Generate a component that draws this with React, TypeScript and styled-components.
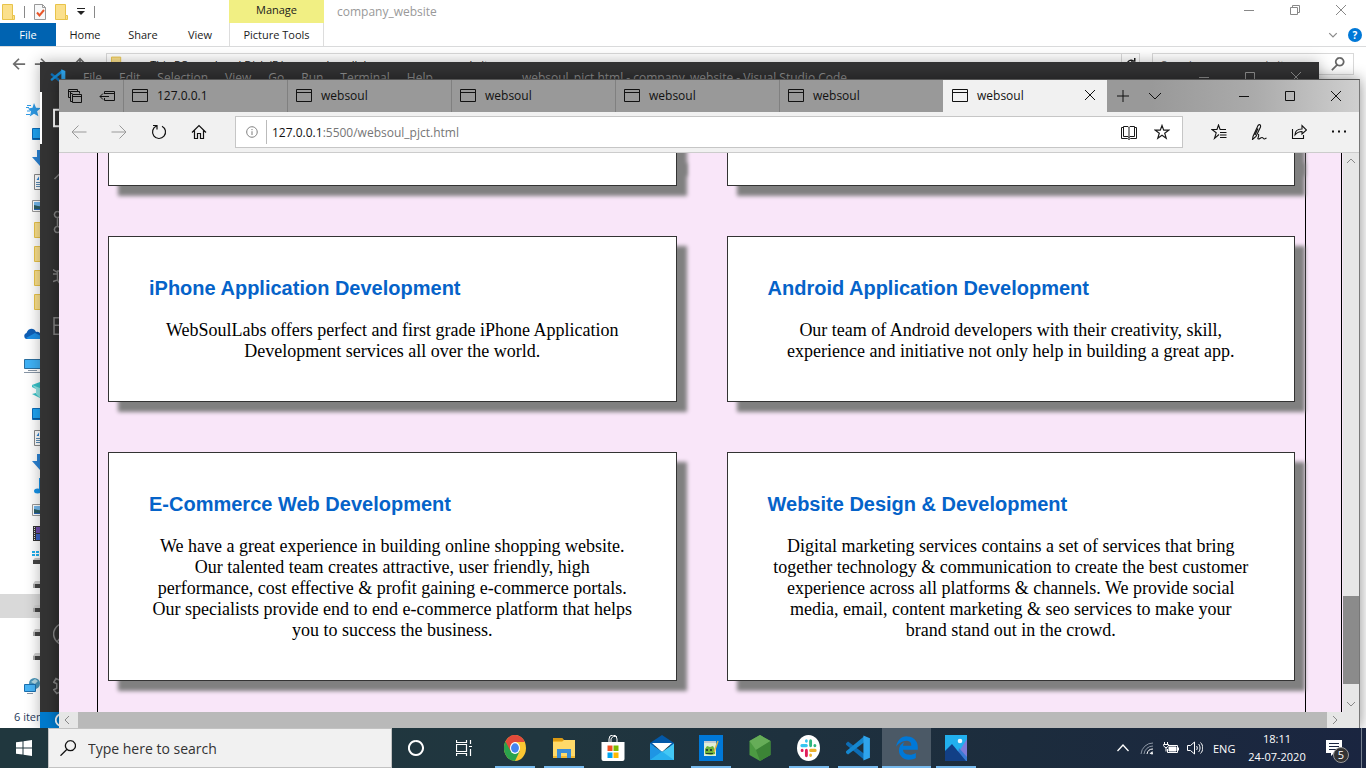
import React from "react";
import styled, { createGlobalStyle, css } from "styled-components";
import { FaEdgeLegacy } from "react-icons/fa";

const GlobalStyle = createGlobalStyle`
  *, *::before, *::after { box-sizing: border-box; }
  html, body { margin: 0; height: 100%; overflow: hidden; }
  #root { height: 100%; }
  body { font-family: "Open Sans", "Noto Sans", sans-serif; font-size: 11px; color: #1b1b1b; }
  button, input { font: inherit; color: inherit; margin: 0; padding: 0; border: 0; background: none; outline: none; }
  button { cursor: pointer; }
  svg { display: block; flex: none; }
  ul, ol { list-style: none; margin: 0; padding: 0; }
`;

/* ---------- desktop ---------- */

const Screen = styled.div`
  display: flex;
  flex-direction: column;
  height: 100vh;
  overflow: hidden;
`;

const Desktop = styled.div`
  position: relative;
  flex: 1;
  min-height: 0;
  overflow: hidden;
`;

/* ---------- file explorer ---------- */

const Explorer = styled.section`
  display: flex;
  flex-direction: column;
  height: 100%;
  background: #fff;
`;

const ExplorerTitle = styled.header`
  display: flex;
  height: 23px;
`;

const QuickAccess = styled.div`
  display: flex;
  align-items: center;
  gap: 9px;
  width: 229px;
  padding-left: 2px;
`;

const QuickLine = styled.span`
  width: 1px;
  height: 12px;
  background: #888;
`;

const ContextTab = styled.div`
  width: 95px;
  height: 23px;
  background: #f1ef83;
  text-align: center;
  line-height: 20px;
`;

const ExplorerName = styled.h1`
  margin: 0;
  padding-left: 13px;
  font-size: 12px;
  font-weight: 400;
  line-height: 24px;
  color: #999;
`;

const CaptionButtons = styled.div`
  display: flex;
  margin-left: auto;
`;

const ExplorerCaption = styled(CaptionButtons)`
  height: 20px;
  padding-right: 2px;
`;

const CaptionButton = styled.button<{ $tone: string }>`
  display: flex;
  align-items: center;
  justify-content: center;
  width: 46px;
  color: ${(p) => p.$tone};
`;

const Ribbon = styled.nav`
  display: flex;
  height: 24px;
  border-bottom: 1px solid #dadbdc;
`;

const RibbonTab = styled.button<{ $width: number; $kind?: "file" | "tool" }>`
  width: ${(p) => p.$width}px;
  height: 23px;
  ${(p) =>
    p.$kind === "file" &&
    css`
      background: #0063b1;
      color: #fff;
    `}
  ${(p) =>
    p.$kind === "tool" &&
    css`
      margin-left: 1px;
      border-left: 1px solid #ddd;
      border-right: 1px solid #ddd;
    `}
`;

const RibbonEnd = styled.div`
  display: flex;
  align-items: center;
  gap: 10px;
  margin-left: auto;
  padding-right: 4px;
  color: #8a8a8a;
`;

const HelpButton = styled.button`
  width: 14px;
  height: 14px;
  border-radius: 7px;
  background: #0078d7;
  color: #fff;
  font-size: 10px;
  font-weight: 700;
  line-height: 14px;
`;

const AddressRow = styled.div`
  display: flex;
  gap: 12px;
  height: 51px;
  padding: 6px 12px 0 0;
`;

const AddressArrows = styled.div`
  display: flex;
  align-items: center;
  justify-content: space-between;
  width: 94px;
  height: 22px;
  padding: 0 7px 0 12px;
  color: #6d6d6d;
`;

const Breadcrumb = styled.ol`
  display: flex;
  flex: 1;
  align-items: center;
  gap: 12px;
  height: 22px;
  padding-left: 4px;
  border: 1px solid #d9d9d9;
`;

const RefreshCell = styled.li`
  display: flex;
  align-items: center;
  justify-content: center;
  width: 18px;
  height: 20px;
  margin-left: auto;
  border-left: 1px solid #d9d9d9;
`;

const ExplorerSearch = styled.label`
  display: flex;
  align-items: center;
  width: 202px;
  height: 22px;
  padding: 0 8px;
  border: 1px solid #d9d9d9;
  color: #666;

  input { flex: 1; min-width: 0; }
  input::placeholder { color: #666; opacity: 1; }
`;

const NavTree = styled.ul`
  flex: 1;
  width: 200px;
  min-height: 0;
  overflow: hidden;
`;

const NavRow = styled.li<{ $level: number; $first?: boolean; $selected?: boolean }>`
  display: flex;
  align-items: center;
  height: 24px;
  margin-top: ${(p) => (p.$first ? 8 : 0)}px;
  padding-left: ${(p) => (p.$level ? 32 : 24)}px;
  background: ${(p) => (p.$selected ? "#d9d9d9" : "transparent")};
`;

const ExplorerStatus = styled.footer`
  height: 22px;
  padding-left: 14px;
  color: #1e395b;
  line-height: 22px;
`;

/* ---------- code editor ---------- */

const EditorWindow = styled.section`
  position: absolute;
  inset: 62px 47px 0 40px;
  display: flex;
  flex-direction: column;
  background: #333;
  box-shadow: 0 0 14px rgba(0, 0, 0, 0.3);
`;

const EditorTitle = styled.header`
  display: flex;
  align-items: center;
  height: 30px;
  background: #323233;
  color: #8e8e8e;
  font-size: 12px;
`;

const EditorMenu = styled.nav`
  display: flex;
  align-items: center;
  gap: 17px;
  flex: 1;
  padding-left: 10px;
`;

const EditorName = styled.h2`
  margin: 0;
  font-size: 12px;
  font-weight: 400;
`;

const EditorCaption = styled.div`
  display: flex;
  flex: 1;
  justify-content: flex-end;
  height: 30px;
`;

const ActivityBar = styled.nav`
  display: flex;
  flex: 1;
  flex-direction: column;
  width: 48px;
`;

const Activity = styled.button<{ $active?: boolean; $push?: boolean }>`
  display: flex;
  align-items: center;
  justify-content: center;
  width: 48px;
  height: 52px;
  margin-top: ${(p) => (p.$push ? "auto" : "0")};
  border-left: 2px solid ${(p) => (p.$active ? "#fff" : "transparent")};
  color: ${(p) => (p.$active ? "#fff" : "#858585")};
`;

const EditorStatus = styled.footer`
  display: flex;
  align-items: center;
  height: 16px;
  padding-left: 15px;
  background: #007acc;
  color: #fff;
`;

/* ---------- browser ---------- */

const Browser = styled.section`
  position: absolute;
  inset: 79px 6px 0 59px;
  display: flex;
  flex-direction: column;
  border-top: 1px solid #555;
  border-right: 1px solid #777;
  background: #f1f1f1;
  box-shadow: 0 0 14px rgba(0, 0, 0, 0.45);
`;

const TabStrip = styled.header`
  display: flex;
  height: 32px;
  background: linear-gradient(90deg, #999 0%, #999 84%, #ababab 92%, #cfcfcf 100%);
  color: #111;
`;

const TabTools = styled.div`
  display: flex;
  align-items: center;
  justify-content: space-between;
  width: 64px;
  padding: 0 8px;
`;

const BrowserTab = styled.div<{ $active?: boolean }>`
  display: flex;
  align-items: center;
  flex: 0 1 164px;
  padding: 0 9px 2px 8px;
  border-left: 1px solid ${(p) => (p.$active ? "#f1f1f1" : "#808080")};
  background: ${(p) => (p.$active ? "#f1f1f1" : "transparent")};
`;

const TabButton = styled.button`
  display: flex;
  align-items: center;
  gap: 9px;
  flex: 1;
  height: 30px;
  font-size: 12px;
`;

const SquareButton = styled.button<{ $width: number }>`
  display: flex;
  align-items: center;
  justify-content: center;
  width: ${(p) => p.$width}px;
`;

const Toolbar = styled.div`
  display: flex;
  align-items: center;
  height: 41px;
  border-bottom: 1px solid #ccc;
`;

const ToolButton = styled.button<{ $dim?: boolean }>`
  display: flex;
  align-items: center;
  justify-content: center;
  width: 40px;
  height: 40px;
  color: ${(p) => (p.$dim ? "#999" : "#111")};
`;

const UrlBox = styled.div`
  display: flex;
  align-items: center;
  flex: 1;
  height: 32px;
  margin: 0 16px;
  padding: 0 4px 0 10px;
  border: 1px solid #c6c6c6;
  background: #fff;
  font-size: 12px;
`;

const SiteInfo = styled.button`
  color: #777;
`;

const UrlLabel = styled.label`
  display: flex;
  align-items: center;
  flex: 1;
  height: 24px;
  margin-left: 8px;
  padding-left: 5px;
  border-left: 1px solid #bbb;
  color: #111;

  input { flex: 1; color: #767676; }
`;

const UrlAction = styled.button`
  display: flex;
  align-items: center;
  justify-content: center;
  width: 33px;
  height: 30px;
`;

const PageRow = styled.div`
  display: flex;
  flex: 1;
  min-height: 0;
`;

const PageView = styled.main`
  display: flex;
  flex: 1;
  min-width: 0;
  overflow: hidden;
  padding-right: 1px;
  background: #f9e6f9;
`;

const PageBody = styled.div`
  display: flex;
  flex: 1;
  padding: 0 35px 0 38px;
  border-right: 1px solid #000;
`;

const Services = styled.section`
  flex: 1;
  border: solid #000;
  border-width: 0 1px;
  padding: 0 10px;
`;

const CardGrid = styled.div`
  display: grid;
  grid-template-columns: 1fr 1fr;
  gap: 50px;
`;

const Card = styled.article`
  padding: 40px 40px 39px;
  border: 1px solid #333;
  background: #fff;
  box-shadow: 10px 10px 4px #808080;
`;

/* the lower end of a card whose upper part is scrolled out of view */
const CardTail = styled(Card)`
  height: 33px;
  padding: 0;
  border-top: 0;
  box-shadow: 10px 10px 4px #808080, 10px -10px 4px #808080;
`;

const CardTitle = styled.h3`
  margin: 0 0 21px;
  font: bold 20px/22px "Liberation Sans", Arial, sans-serif;
  color: #0563c9;
`;

const CardText = styled.p`
  margin: 0;
  font: 18px/21px "Liberation Serif", "Times New Roman", serif;
  color: #000;
  text-align: center;
`;

const VScroll = styled.div`
  display: flex;
  flex-direction: column;
  width: 16px;
  background: #e6e6e6;
  color: #888;
`;

const HScroll = styled.div`
  display: flex;
  height: 16px;
  background: #e6e6e6;
  color: #888;
`;

const ScrollButton = styled.button`
  display: flex;
  align-items: center;
  justify-content: center;
  width: 16px;
  height: 16px;
`;

const ScrollTrack = styled.div`
  display: flex;
  flex-direction: column;
  flex: 1;
`;

const ScrollThumbV = styled.div`
  height: 88px;
  margin: auto 0 12px;
  background: #8b8b8b;
`;

const ScrollThumbH = styled.div`
  flex: 1;
  margin-left: 3px;
  background: #b9b9b9;
`;

const ScrollCorner = styled.div`
  width: 16px;
`;

/* ---------- taskbar ---------- */

const Taskbar = styled.footer`
  display: flex;
  height: 40px;
  background: linear-gradient(90deg, #20373e 0%, #20363f 40%, #1c2c3d 75%, #1a2540 100%);
  color: #fff;
`;

const TaskButton = styled.button<{ $wide?: boolean; $open?: boolean; $active?: boolean }>`
  display: flex;
  align-items: center;
  justify-content: center;
  flex: none;
  width: ${(p) => (p.$wide ? 49 : 48)}px;
  ${(p) =>
    p.$open &&
    css`
      background: linear-gradient(#76b9ed, #76b9ed) center bottom / ${p.$active ? 49 : 40}px 2px no-repeat
        ${p.$active ? "#4b5966" : "transparent"};
    `}
`;

const TaskApps = styled.div`
  display: flex;
  padding-left: 2px;
`;

const TaskSearch = styled.label`
  display: flex;
  align-items: center;
  gap: 12px;
  flex: 0 1 344px;
  padding-left: 11px;
  border: 1px solid #c2c2c2;
  background: #f1f1f1;
  color: #111;
  font-size: 14px;

  input { flex: 1; min-width: 0; }
  input::placeholder { color: #333; opacity: 1; }
`;

const Tray = styled.div`
  display: flex;
  margin-left: auto;
`;

const TrayButton = styled.button`
  display: flex;
  align-items: center;
  justify-content: center;
  width: 24px;
`;

const Language = styled.button`
  width: 40px;
  padding-left: 6px;
  text-align: left;
`;

const Clock = styled.button`
  width: 60px;
  line-height: 18px;
  white-space: nowrap;
`;

const ActionCenter = styled.button`
  position: relative;
  display: flex;
  align-items: center;
  justify-content: center;
  width: 54px;
`;

const Badge = styled.span`
  position: absolute;
  left: 26px;
  top: 19px;
  width: 16px;
  height: 16px;
  border: 1px solid #999;
  border-radius: 8px;
  background: #333;
  font-size: 11px;
  line-height: 14px;
`;

const ShowDesktop = styled.button`
  width: 5px;
  border-left: 1px solid #76808f;
`;

/* ---------- icons ---------- */

type IconProps = { size?: number; d: string; w?: number; box?: number };

const Line = ({ size = 16, d, w = 1, box = 16 }: IconProps) => (
  <svg width={size} height={size} viewBox={`0 0 ${box} ${box}`} fill="none" stroke="currentColor" strokeWidth={w} aria-hidden>
    <path d={d} />
  </svg>
);

const D = {
  min: "M3 8.5h10",
  max: "M3.5 3.5h9v9h-9z",
  restore: "M3.5 5.5h7v7h-7zM5.5 5.5v-2h7v7h-2",
  close: "M3 3l10 10M13 3L3 13",
  down: "M2 5l6 6 6-6",
  up: "M4 10l4-4 4 4",
  downSmall: "M4 6l4 4 4-4",
  left: "M10 4L6 8l4 4",
  right: "M6 4l4 4-4 4",
  back: "M15.500 8H1M7.500 1.500L1 8l6.500 6.500",
  forward: "M.5 8H15M8.500 1.500L15 8l-6.500 6.500",
  page: "M.5 2.500h15v12H.5zM.5 5.500h15",
  plus: "M8 2v12M2 8h12",
};

const FolderIcon = ({ w = 13, h = 16 }: { w?: number; h?: number }) => (
  <svg width={w} height={h} viewBox="0 0 13 16" aria-hidden>
    <path d="M.5.5h10v11h2v4H.5z" fill="#fbe08c" stroke="#e8c34a" />
    <path d="M10.500 11.500v4" stroke="#e8c34a" />
  </svg>
);

const TickPage = () => (
  <svg width="12" height="16" viewBox="0 0 12 16" fill="none" aria-hidden>
    <path d="M.5.5h8l3 3v12H.5z" fill="#f7f8f9" stroke="#999" />
    <path d="M8.500.5v3h3" stroke="#999" />
    <path d="M3 8.500l2.500 3L10 6" stroke="#e8562a" strokeWidth="2" />
  </svg>
);

const VsCodeLogo = ({ size = 16 }: { size?: number }) => (
  <svg width={size} height={size} viewBox="0 0 24 24" aria-hidden>
    <path d="M1 7.500L2.800 6 18 17.600V23L1 9z" fill="#0d6db5" />
    <path d="M1 16.500L2.800 18 18 6.400V1L1 15z" fill="#1587cf" />
    <path d="M17 .5L23 3v18l-6 2.500z" fill="#2fa4ec" />
  </svg>
);

const navIcons: Record<string, React.ReactNode> = {
  star: (
    <svg width="18" height="16" viewBox="0 0 18 16" aria-hidden>
      <path d="M10 1l2 4.700 5 .3-3.900 3.300 1.300 5L10 11.700 5.800 14.500 7 9.500 4 6.500l4.500-.8z" fill="#2f9be6" />
      <path d="M3 3.500h4M2 5.500h3M3 9h3M2 12.500h4" stroke="#2f9be6" />
    </svg>
  ),
  desktop: (
    <svg width="16" height="14" viewBox="0 0 16 14" aria-hidden>
      <path d="M.5 1.500h15v11H.5z" fill="#1ea4f3" stroke="#0c6cb8" />
      <path d="M1 11.500h15" stroke="#0c5a9c" />
    </svg>
  ),
  download: (
    <svg width="16" height="16" viewBox="0 0 16 16" aria-hidden>
      <path d="M5 0h6v7h5l-8 9-8-9h5z" fill="#2b83d4" />
    </svg>
  ),
  doc: (
    <svg width="16" height="16" viewBox="0 0 16 16" fill="none" aria-hidden>
      <path d="M2.500.5h11v15h-11z" fill="#fff" stroke="#888" />
      <path d="M4.500 6L7 2.500V6z" fill="#2b83d4" />
      <path d="M4 8.500h8M4 10.500h8M4 12.500h8M8 4.500h4" stroke="#5b8db5" />
    </svg>
  ),
  picture: (
    <svg width="16" height="12" viewBox="0 0 16 12" aria-hidden>
      <path d="M.5.5h15v11H.5z" fill="#fff" stroke="#999" />
      <path d="M2 2h12v8H2z" fill="#75b9ed" />
      <path d="M2 5l4 1 8 1v3H2z" fill="#2d5f65" />
      <path d="M2 9h12v1H2z" fill="#2b66b8" />
    </svg>
  ),
  folder: (
    <svg width="16" height="16" viewBox="0 0 16 16" aria-hidden>
      <path d="M2.500.5h11v15h-11z" fill="#fbe08c" stroke="#e8c34a" />
    </svg>
  ),
  cloud: (
    <svg width="18" height="12" viewBox="0 0 18 12" aria-hidden>
      <path d="M3 11C0 11-1 6 2.500 5 4 0 10-1 12 4c4-1 5 2 5 7z" fill="#0f5eb5" />
      <path d="M2 10l9-5 6 3v3H4z" fill="#1e8fe6" />
    </svg>
  ),
  pc: (
    <svg width="18" height="16" viewBox="0 0 18 16" aria-hidden>
      <path d="M.5 1.500h17v9H.5z" fill="#3fb1f5" stroke="#2b6f9f" />
      <path d="M4 12.500h9M0 14.500h18" stroke="#8795a5" />
    </svg>
  ),
  cube: (
    <svg width="16" height="16" viewBox="0 0 16 16" aria-hidden>
      <path d="M0 3l8-3 8 3v9l-8 4-8-4z" fill="#37c2c8" />
      <path d="M0 3l4 4v5l4 4V6z" fill="#8ee3e3" />
      <path d="M0 5l4 2v4l-4 1z" fill="#fff" />
    </svg>
  ),
  music: (
    <svg width="16" height="16" viewBox="0 0 16 16" aria-hidden>
      <ellipse cx="5.500" cy="13" rx="3.500" ry="2.500" fill="#1592e8" />
      <path d="M7 0h2v13H7z" fill="#1592e8" />
    </svg>
  ),
  video: (
    <svg width="16" height="16" viewBox="0 0 16 16" aria-hidden>
      <path d="M1 0h14v15H1z" fill="#333" />
      <path d="M4 1h9v6H4z" fill="#6c4aa8" />
      <path d="M4 8h9v6H4z" fill="#3961c4" />
      <path d="M2.500 1v13" stroke="#ddd" strokeDasharray="1 1" />
    </svg>
  ),
  system: (
    <svg width="16" height="16" viewBox="0 0 16 16" aria-hidden>
      <path d="M0 1h3v2H0zM4 1h3v2H4zM0 4h3v2H0zM4 4h3v2H4z" fill="#1fb0ee" />
      <path d="M3 8h11v2H1z" fill="#c8c8c8" />
      <path d="M1 10h14v4H1z" fill="#444" />
    </svg>
  ),
  drive: (
    <svg width="16" height="16" viewBox="0 0 16 16" aria-hidden>
      <path d="M3 7h11l1 3H1z" fill="#cfcfcf" />
      <path d="M1 10h14v4H1z" fill="#444" />
      <path d="M1 10h2v4H1z" fill="#aaa" />
    </svg>
  ),
  network: (
    <svg width="18" height="18" viewBox="0 0 18 18" aria-hidden>
      <circle cx="10.500" cy="6.500" r="5.500" fill="#4b96ba" />
      <path d="M7 5l4-3 3 2-3 3z" fill="#b3d8e2" />
      <path d="M.5 7.500h11v7H.5z" fill="#48b4f5" stroke="#1b6fae" />
      <path d="M3 16.500h6" stroke="#8795a5" />
    </svg>
  ),
};

const navRows: { icon: string; level: number; first?: boolean; selected?: boolean }[] = [
  { icon: "star", level: 0 },
  { icon: "desktop", level: 1 },
  { icon: "download", level: 1 },
  { icon: "doc", level: 1 },
  { icon: "picture", level: 1 },
  { icon: "folder", level: 1 },
  { icon: "folder", level: 1 },
  { icon: "folder", level: 1 },
  { icon: "folder", level: 1 },
  { icon: "cloud", level: 0, first: true },
  { icon: "pc", level: 0, first: true },
  { icon: "cube", level: 1 },
  { icon: "desktop", level: 1 },
  { icon: "doc", level: 1 },
  { icon: "download", level: 1 },
  { icon: "music", level: 1 },
  { icon: "picture", level: 1 },
  { icon: "video", level: 1 },
  { icon: "system", level: 1 },
  { icon: "drive", level: 1 },
  { icon: "drive", level: 1, selected: true },
  { icon: "drive", level: 1 },
  { icon: "drive", level: 1 },
  { icon: "network", level: 0, first: true },
];

const ChromeLogo = () => (
  <svg width="22" height="26" viewBox="0 0 24 24" preserveAspectRatio="none" aria-hidden>
    <circle cx="12" cy="12" r="12" fill="#fbc632" />
    <path d="M12 12L1.600 6A12 12 0 0 0 12 24l5-9z" fill="#2ba24c" />
    <path d="M12 12V6.500h10.700A12 12 0 0 0 1.600 6L7 14.500z" fill="#e24a3b" />
    <circle cx="12" cy="12" r="5.500" fill="#fff" />
    <circle cx="12" cy="12" r="4.300" fill="#4584f0" />
  </svg>
);

const FilesLogo = () => (
  <svg width="22" height="22" viewBox="0 0 22 22" aria-hidden>
    <path d="M0 1h9l2 2h11v18H0z" fill="#f5b92e" />
    <path d="M0 1h9l2 3H0z" fill="#dc9a13" />
    <path d="M0 5h9l2-2h11v16H0z" fill="#ffd969" />
    <path d="M4 12h14v9h-4v-5H8v5H4z" fill="#3b8cd6" />
  </svg>
);

const StoreLogo = () => (
  <svg width="24" height="27" viewBox="0 0 24 27" fill="none" aria-hidden>
    <path d="M8 8V4a4 4 0 0 1 8 0v4M10 8V4a4 4 0 0 1 6-2" stroke="#fff" />
    <path d="M.5 7h23v17a2 2 0 0 1-2 2h-19a2 2 0 0 1-2-2z" fill="#fff" />
    <path d="M6.500 10.500h5v5.500h-5z" fill="#f25022" />
    <path d="M12.500 10.500h5v5.500h-5z" fill="#7fba00" />
    <path d="M6.500 17.500h5V23h-5z" fill="#00a4ef" />
    <path d="M12.500 17.500h5V23h-5z" fill="#ffb900" />
  </svg>
);

const MailLogo = () => (
  <svg width="24" height="26" viewBox="0 0 24 26" aria-hidden>
    <path d="M0 8l12-8 12 8v3H0z" fill="#0358a7" />
    <path d="M2 8h20l-10 9z" fill="#fff" />
    <path d="M0 8.500L24 25H0z" fill="#1e95e4" />
    <path d="M24 8.500V25H1z" fill="#43c8f5" />
    <path d="M24 25H0l12-8.500z" fill="#28b0ee" />
  </svg>
);

const EditorAppLogo = () => (
  <svg width="24" height="26" viewBox="0 0 24 26" aria-hidden>
    <path d="M0 0h24v26H0z" fill="#0078d7" />
    <path d="M5 6h12v15H5z" fill="#dfeed8" />
    <path d="M5 6h12v2H5z" fill="#c3cbd1" />
    <path d="M6 14l2-3 3 1 3-1 2 4v4l-4 1-6-1z" fill="#6db33b" />
    <path d="M7 14h2v2H7zM11 14h2v2h-2zM7 18h7v1H7z" fill="#243" />
    <path d="M19 6l-4 11" stroke="#e0b548" strokeWidth="1.500" />
  </svg>
);

const NodeLogo = () => (
  <svg width="22" height="26" viewBox="0 0 22 26" aria-hidden>
    <path d="M11 0l10.500 6v14L11 26 .5 20V6z" fill="#4c9a42" />
    <path d="M11 0l10.500 6L7 15 .5 6z" fill="#66ad58" />
    <path d="M7 15l14.500-9v14L11 26z" fill="#3c8436" />
  </svg>
);

const SlackLogo = () => (
  <svg width="23" height="26" viewBox="0 0 24 24" preserveAspectRatio="none" strokeWidth="3" strokeLinecap="round" aria-hidden>
    <circle cx="12" cy="12" r="12" fill="#fff" />
    <path d="M9.800 5.500v.1M9.800 9.800H5" stroke="#36c5f0" />
    <path d="M14.200 5.500v4.300M18.600 9.800h.1" stroke="#2eb67d" />
    <path d="M14.200 14.200H19M14.200 18.600v.1" stroke="#ecb22e" />
    <path d="M9.800 14.200V19M5.300 14.200h.1" stroke="#e01e5a" />
  </svg>
);

const PhotosLogo = () => (
  <svg width="22" height="26" viewBox="0 0 22 26" aria-hidden>
    <path d="M0 0h22v26H0z" fill="#21b0ee" />
    <path d="M22 4v22H8z" fill="#7d7bd8" />
    <path d="M14 13l8 9v4H11z" fill="#3879d3" />
    <path d="M0 16l7-7 14 17H0z" fill="#123f86" />
    <circle cx="15" cy="6" r="2.300" fill="#eaf7ff" />
  </svg>
);

/* ---------- data ---------- */

const menus = ["File", "Edit", "Selection", "View", "Go", "Run", "Terminal", "Help"];
const tabs = ["127.0.0.1", "websoul", "websoul", "websoul", "websoul", "websoul"];

const services = [
  {
    title: "iPhone Application Development",
    text: "WebSoulLabs offers perfect and first grade iPhone Application Development services all over the world.",
  },
  {
    title: "Android Application Development",
    text: "Our team of Android developers with their creativity, skill, experience and initiative not only help in building a great app.",
  },
  {
    title: "E-Commerce Web Development",
    text: "We have a great experience in building online shopping website. Our talented team creates attractive, user friendly, high performance, cost effective & profit gaining e-commerce portals. Our specialists provide end to end e-commerce platform that helps you to success the business.",
  },
  {
    title: "Website Design & Development",
    text: "Digital marketing services contains a set of services that bring together technology & communication to create the best customer experience across all platforms & channels. We provide social media, email, content marketing & seo services to make your brand stand out in the crowd.",
  },
];

const apps: { name: string; icon: React.ReactNode; open?: boolean; active?: boolean }[] = [
  { name: "Chrome", icon: <ChromeLogo />, open: true },
  { name: "File Explorer", icon: <FilesLogo />, open: true },
  { name: "Store", icon: <StoreLogo /> },
  { name: "Mail", icon: <MailLogo /> },
  { name: "Notepad++", icon: <EditorAppLogo />, open: true },
  { name: "Node", icon: <NodeLogo /> },
  { name: "Slack", icon: <SlackLogo />, open: true },
  { name: "Code", icon: <VsCodeLogo size={26} />, open: true },
  { name: "Edge", icon: <FaEdgeLegacy size={24} color="#0078d7" />, open: true, active: true },
  { name: "Photos", icon: <PhotosLogo />, open: true },
];

/* ---------- windows ---------- */

const ExplorerWindow = () => (
  <Explorer>
    <ExplorerTitle>
      <QuickAccess>
        <FolderIcon />
        <QuickLine />
        <TickPage />
        <FolderIcon />
        <svg width="8" height="7" viewBox="0 0 8 7" aria-hidden>
          <path d="M0 0h8v1H0zM0 3h8L4 7z" fill="#222" />
        </svg>
        <QuickLine />
      </QuickAccess>
      <ContextTab>Manage</ContextTab>
      <ExplorerName>company_website</ExplorerName>
      <ExplorerCaption>
        <CaptionButton $tone="#888" aria-label="Minimize"><Line d={D.min} /></CaptionButton>
        <CaptionButton $tone="#888" aria-label="Restore"><Line d={D.restore} /></CaptionButton>
        <CaptionButton $tone="#888" aria-label="Close"><Line d={D.close} /></CaptionButton>
      </ExplorerCaption>
    </ExplorerTitle>
    <Ribbon>
      <RibbonTab $width={56} $kind="file">File</RibbonTab>
      <RibbonTab $width={58}>Home</RibbonTab>
      <RibbonTab $width={58}>Share</RibbonTab>
      <RibbonTab $width={56}>View</RibbonTab>
      <RibbonTab $width={95} $kind="tool">Picture Tools</RibbonTab>
      <RibbonEnd>
        <Line size={10} d={D.down} w={2} />
        <HelpButton>?</HelpButton>
      </RibbonEnd>
    </Ribbon>
    <AddressRow>
      <AddressArrows>
        <Line size={14} d="M15 8H2M8 2L2 8l6 6" w={2} />
        <Line size={14} d="M1 8h13M8 2l6 6-6 6" w={2} />
        <Line size={8} d={D.down} w={2} />
        <Line size={14} d="M8 15V2M2 8l6-6 6 6" w={2} />
      </AddressArrows>
      <Breadcrumb>
        <li><FolderIcon w={12} /></li>
        <li>›</li>
        <li>This PC</li>
        <li>›</li>
        <li>Local Disk (E:)</li>
        <li>›</li>
        <li>websoullabs</li>
        <li>›</li>
        <li>company_website</li>
        <RefreshCell><Line size={12} d="M13 8a5 5 0 1 1-2-4M8 4h5V0" w={2} /></RefreshCell>
      </Breadcrumb>
      <ExplorerSearch>
        <input aria-label="Search folder" placeholder="Search company_website" />
        <Line size={14} d="M10 1a4.500 4.500 0 1 1-.1 0M7 9l-6 6" w={2} />
      </ExplorerSearch>
    </AddressRow>
    <NavTree>
      {navRows.map((row, i) => (
        <NavRow key={i} $level={row.level} $first={row.first} $selected={row.selected}>
          {navIcons[row.icon]}
        </NavRow>
      ))}
    </NavTree>
    <ExplorerStatus>6 items</ExplorerStatus>
  </Explorer>
);

const CodeWindow = () => (
  <EditorWindow>
    <EditorTitle>
      <EditorMenu>
        <VsCodeLogo size={16} />
        {menus.map((m) => (
          <button key={m}>{m}</button>
        ))}
      </EditorMenu>
      <EditorName>websoul_pjct.html - company_website - Visual Studio Code</EditorName>
      <EditorCaption>
        <CaptionButton $tone="#8e8e8e" aria-label="Minimize"><Line d={D.min} /></CaptionButton>
        <CaptionButton $tone="#8e8e8e" aria-label="Maximize"><Line d={D.max} /></CaptionButton>
        <CaptionButton $tone="#8e8e8e" aria-label="Close"><Line d={D.close} /></CaptionButton>
      </EditorCaption>
    </EditorTitle>
    <ActivityBar>
      <Activity $active aria-label="Files"><Line size={24} d="M.7 2.500h9l3 3v8h-12z" w={1.3} /></Activity>
      <Activity aria-label="Search"><Line size={24} d="M10 1a5 5 0 1 1-.1 0M6 9l-5 5" /></Activity>
      <Activity aria-label="Branches"><Line size={24} d="M3 1a2 2 0 1 1-.1 0M3 11a2 2 0 1 1-.1 0M3 5v6M12 4a2 2 0 1 1-.1 0M12 8c0 2-4 2-8 2" /></Activity>
      <Activity aria-label="Debug"><Line size={24} d="M3 6h8v5a4 4 0 0 1-8 0zM0 8h3M0 13l3-1M0 5l3 2M12 8h3M12 12l3 1M5 6a3 3 0 0 1 6 0" /></Activity>
      <Activity aria-label="Extensions"><Line size={24} d="M.7 2.500h6v5h6v6h-12zM.7 7.500h6v6M10.500 1.500h4v4h-4z" /></Activity>
      <Activity $push aria-label="Account"><Line size={24} d="M7.500 1a7 7 0 1 1-.1 0M8 4a2.500 2.500 0 1 1-.1 0M3 13c2-4 8-4 10 0" /></Activity>
      <Activity aria-label="Settings"><Line size={24} d="M6.500 1h3v2l2 1 2-1 1.500 2.500-2 1v3l2 1L13.500 13l-2-1-2 1v2h-3v-2l-2-1-2 1L.5 10.500l2-1v-3l-2-1L2 3l2 1 2-1z" /></Activity>
    </ActivityBar>
    <EditorStatus><Line size={14} d="M8 1a7 7 0 1 1-.1 0M5 5l6 6M11 5l-6 6" w={2} /></EditorStatus>
  </EditorWindow>
);

const BrowserWindow = () => (
  <Browser>
    <TabStrip>
      <TabTools>
        <Line d="M3.500 9.500h-2v-8h9v2M1.500 3.500h2M5.500 13.500h-2v-10h9v2M3.500 5.500h2M5.500 6.500h9v8h-9zM5.500 8.500h9" />
        <Line d="M5.500 6V3.500h10v9h-10V10M5.500 5.500h10M10 8.500H1M4 5.500l-3 3 3 3" />
      </TabTools>
      {tabs.map((t, i) => {
        const active = i === tabs.length - 1;
        return (
          <BrowserTab key={i} $active={active}>
            <TabButton>
              <Line d={D.page} />
              {t}
            </TabButton>
            {active && (
              <button aria-label="Close tab">
                <Line d={D.close} />
              </button>
            )}
          </BrowserTab>
        );
      })}
      <SquareButton $width={32} aria-label="New tab"><Line d={D.plus} /></SquareButton>
      <SquareButton $width={32} aria-label="Tab previews"><Line d={D.down} /></SquareButton>
      <CaptionButtons>
        <CaptionButton $tone="#111" aria-label="Minimize"><Line d={D.min} /></CaptionButton>
        <CaptionButton $tone="#111" aria-label="Maximize"><Line d={D.max} /></CaptionButton>
        <CaptionButton $tone="#111" aria-label="Close"><Line d={D.close} /></CaptionButton>
      </CaptionButtons>
    </TabStrip>
    <Toolbar>
      <ToolButton $dim aria-label="Back"><Line d={D.back} /></ToolButton>
      <ToolButton $dim aria-label="Forward"><Line d={D.forward} /></ToolButton>
      <ToolButton aria-label="Refresh"><Line d="M5.500 2A6.500 6.500 0 1 0 11 2.200M2 1.500h4v4" w={1.2} /></ToolButton>
      <ToolButton aria-label="Home"><Line d="M1 8.500l7-7 7 7M3.500 6.500v8h3v-5h3v5h3v-8" w={1.2} /></ToolButton>
      <UrlBox>
        <SiteInfo aria-label="Site information">
          <Line size={12} d="M8 1a7 7 0 1 1-.1 0M8 7v5M8 4v1.500" w={1.3} />
        </SiteInfo>
        <UrlLabel>
          <span>127.0.0.1</span>
          <input aria-label="Address" defaultValue=":5500/websoul_pjct.html" />
        </UrlLabel>
        <UrlAction aria-label="Reading view"><Line d="M2.500 3.500h-2v11h6l1.500 1 1.500-1h6v-11h-2M2.500 2.500H7l1 1 1-1h4.500v10H9l-1 1-1-1H2.500zM8 3.500v11" /></UrlAction>
        <UrlAction aria-label="Favorite"><Line d="M8 1.500l1.700 4.700h5l-4 3 1.500 5L8 11.200l-4.200 3 1.500-5-4-3h5z" w={1.2} /></UrlAction>
      </UrlBox>
      <ToolButton aria-label="Favorites"><Line d="M8 10.500l-4.500 3.800 1.700-5.500L1 5.500h5L7.500 1l1.600 4.500H15M9 8.500h6.500M9 11h6.500M9 13.500h6.500" w={1.1} /></ToolButton>
      <ToolButton aria-label="Notes"><Line d="M1.500 15.500l.5-3L7 1.500C8.500 0 10 .5 9.500 3L5 12.500l-3.500 3zM7 4.500L4 11M7.500 10c1 3-2 5 0 5 1.500 0 2-1.500 3.500-1.500s1 1.500 2.500 1.500L15.500 14" w={1.1} /></ToolButton>
      <ToolButton aria-label="Share"><Line d="M1.500 5v9.500h11V11M4 11c0-4 3-6 7-6V1.500L15.500 6 11 10V7.500c-3 0-5 1-7 3.500z" w={1.1} /></ToolButton>
      <ToolButton aria-label="More"><Line d="M1 7.500h2M7 7.500h2M13 7.500h2" w={2} /></ToolButton>
    </Toolbar>
    <PageRow>
      <PageView>
        <PageBody>
          <Services>
            <CardGrid>
              <CardTail />
              <CardTail />
              {services.map((s) => (
                <Card key={s.title}>
                  <CardTitle>{s.title}</CardTitle>
                  <CardText>{s.text}</CardText>
                </Card>
              ))}
            </CardGrid>
          </Services>
        </PageBody>
      </PageView>
      <VScroll>
        <ScrollButton aria-label="Scroll up"><Line d={D.up} /></ScrollButton>
        <ScrollTrack><ScrollThumbV /></ScrollTrack>
        <ScrollButton aria-label="Scroll down"><Line d={D.downSmall} /></ScrollButton>
      </VScroll>
    </PageRow>
    <HScroll>
      <ScrollButton aria-label="Scroll left"><Line d={D.left} /></ScrollButton>
      <ScrollThumbH />
      <ScrollButton aria-label="Scroll right"><Line d={D.right} /></ScrollButton>
      <ScrollCorner />
    </HScroll>
  </Browser>
);

const WindowsTaskbar = () => (
  <Taskbar>
    <TaskButton aria-label="Start">
      <svg width="16" height="16" viewBox="0 0 16 16" fill="#fff" aria-hidden>
        <path d="M0 2.300l6.500-.9v6.100H0zM7.500 1.200L16 0v7.500H7.500zM0 8.500h6.500v6.100L0 13.700zM7.500 8.500H16V16l-8.500-1.200z" />
      </svg>
    </TaskButton>
    <TaskSearch>
      <Line d="M10.500.7a5 5 0 1 1-.1 0M7 9.200L.5 15.700" w={1.3} />
      <input aria-label="Search" placeholder="Type here to search" />
    </TaskSearch>
    <TaskButton aria-label="Cortana"><Line d="M8 1a7 7 0 1 1-.1 0" w={2} /></TaskButton>
    <TaskButton aria-label="Task view"><Line d="M.5 0v2.500h10V0M.5 4.500h10v7H.5zM.5 16v-2.500h10V16M14.500 0v4M14.500 9v7M13 6.500h3" w={1.2} /></TaskButton>
    <TaskApps>
      {apps.map((a) => (
        <TaskButton key={a.name} aria-label={a.name} $wide $open={a.open} $active={a.active}>
          {a.icon}
        </TaskButton>
      ))}
    </TaskApps>
    <Tray>
      <TrayButton aria-label="Hidden icons"><Line d="M2.500 11L8 5l5.500 6" w={1.3} /></TrayButton>
      <TrayButton aria-label="Network">
        <svg width="14" height="14" viewBox="0 0 14 14" fill="none" stroke="#8d97a5" aria-hidden>
          <path d="M1 13A12 12 0 0 1 13 2M4 13a9 9 0 0 1 9-8" />
          <path d="M7 13a6 6 0 0 1 6-5M10 13a3 3 0 0 1 3-2" stroke="#fff" />
          <circle cx="12" cy="12.500" r="1" fill="#fff" stroke="none" />
        </svg>
      </TrayButton>
      <TrayButton aria-label="Battery">
        <svg width="16" height="14" viewBox="0 0 16 14" fill="none" stroke="#fff" aria-hidden>
          <path d="M5 4.500h9.500v7h-10V8M1.500 1v2M4.500 1v2M.5 3.500h5v1L4 6.500H2L.5 4.500zM3 6.500v4" />
          <path d="M6 6h7v4H6z" fill="#fff" />
          <path d="M15.500 6.500v3" />
        </svg>
      </TrayButton>
      <TrayButton aria-label="Volume"><Line d="M.5 5.500h3l4-3.500v12l-4-3.500h-3zM9.500 6c1 1 1 3 0 4M11.500 4c2 2 2 6 0 8M13.500 2.500c3 3 3 8 0 11" /></TrayButton>
      <Language>ENG</Language>
      <Clock>
        18:11
        <br />
        24-07-2020
      </Clock>
      <ActionCenter aria-label="Notifications">
        <svg width="16" height="16" viewBox="0 0 16 16" aria-hidden>
          <path d="M0 0h16v13H8l-3 3v-3H0z" fill="#fff" />
          <path d="M3 3.500h10M3 6.500h10M3 9.500h7" stroke="#1a2540" />
        </svg>
        <Badge>5</Badge>
      </ActionCenter>
      <ShowDesktop aria-label="Show desktop" />
    </Tray>
  </Taskbar>
);

export default function App() {
  return (
    <Screen>
      <GlobalStyle />
      <Desktop>
        <ExplorerWindow />
        <CodeWindow />
        <BrowserWindow />
      </Desktop>
      <WindowsTaskbar />
    </Screen>
  );
}
